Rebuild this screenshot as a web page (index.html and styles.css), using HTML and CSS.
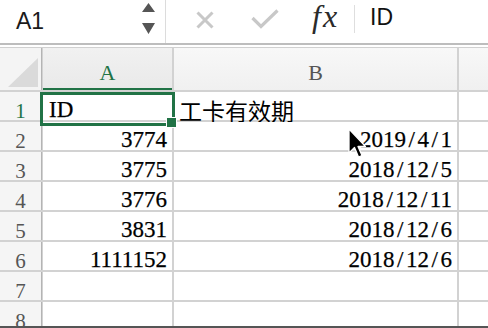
FILE: index.html
```html
<!DOCTYPE html>
<html>
<head>
<meta charset="utf-8">
<link rel="stylesheet" href="styles.css">
</head>
<body>
<div class="fbar">
  <div class="namebox">
    <span class="name">A1</span>
    <svg class="spin" width="13" height="31" viewBox="0 0 13 31"><path d="M6.5 0 L13 9 L0 9 Z M0 20 L13 20 L6.5 31 Z" fill="#555"/></svg>
  </div>
  <svg class="xicon" width="18" height="18" viewBox="0 0 18 18"><path d="M1.5 1.5 L16.5 16.5 M16.5 1.5 L1.5 16.5" stroke="#c8c8c8" stroke-width="3" fill="none"/></svg>
  <svg class="check" width="28" height="20" viewBox="0 0 28 20"><path d="M1.5 9 L10 17.5 L26.5 1.5" stroke="#c8c8c8" stroke-width="3.2" fill="none"/></svg>
  <span class="fx">fx</span>
  <span class="fsep"></span>
  <span class="ftext">ID</span>
</div>
<div class="sheetwrap">
  <div class="sheet">
    <div class="corner"><svg width="41" height="42" viewBox="0 0 41 42"><path d="M8 39 L38 39 L38 10 Z" fill="#dadada"/></svg></div>
    <div class="colhead active">A</div>
    <div class="colhead">B</div>
    <div class="colhead"></div>

    <div class="rowhead active">1</div><div class="cell">ID</div><div class="cell cjk" lang="zh-CN">工卡有效期</div><div class="cell"></div>
    <div class="rowhead">2</div><div class="cell num">3774</div><div class="cell num">2019<span class="s">/</span>4<span class="s">/</span>1</div><div class="cell"></div>
    <div class="rowhead">3</div><div class="cell num">3775</div><div class="cell num">2018<span class="s">/</span>12<span class="s">/</span>5</div><div class="cell"></div>
    <div class="rowhead">4</div><div class="cell num">3776</div><div class="cell num">2018<span class="s">/</span>12<span class="s">/</span>11</div><div class="cell"></div>
    <div class="rowhead">5</div><div class="cell num">3831</div><div class="cell num">2018<span class="s">/</span>12<span class="s">/</span>6</div><div class="cell"></div>
    <div class="rowhead">6</div><div class="cell num">1111152</div><div class="cell num">2018<span class="s">/</span>12<span class="s">/</span>6</div><div class="cell"></div>
    <div class="rowhead">7</div><div class="cell"></div><div class="cell"></div><div class="cell"></div>
    <div class="rowhead">8</div><div class="cell"></div><div class="cell"></div><div class="cell"></div>
  </div>
  <div class="sel"></div>
  <div class="handle"></div>
  <svg class="cursor" width="20" height="32" viewBox="0 0 20 32"><path d="M1 1 L1 25 L6.5 19.5 L10.5 29 L14 27.5 L10 18.5 L17.5 18.5 Z" fill="#000" stroke="#fff" stroke-width="1.3" stroke-linejoin="round"/></svg>
</div>
</body>
</html>
```
FILE: styles.css
```css
html, body {
  margin: 0;
  padding: 0;
  background: #fff;
  width: 488px;
  height: 328px;
  overflow: hidden;
}
body {
  font-family: "Liberation Serif", "Times New Roman", serif;
}
.fbar {
  display: flex;
  align-items: flex-start;
  height: 43px;
  border-bottom: 2px solid #bdbdbd;
  background: #fff;
}
.namebox {
  width: 166px;
  height: 43px;
  box-sizing: border-box;
  padding-left: 16px;
  border-right: 1px solid #dcdcdc;
  display: flex;
  align-items: flex-start;
}
.name {
  flex: 1;
  font-family: "Liberation Sans", Arial, sans-serif;
  font-size: 23px;
  line-height: 23px;
  padding-top: 10px;
  color: #1a1a1a;
}
.spin {
  margin-top: 3px;
  margin-right: 10px;
}
.xicon {
  margin-left: 30px;
  margin-top: 11px;
}
.check {
  margin-left: 37px;
  margin-top: 9px;
}
.fx {
  margin-left: 33px;
  padding-right: 3px;
  font-family: "Liberation Serif", serif;
  font-style: italic;
  font-size: 32px;
  line-height: 36px;
  margin-top: -2px;
  letter-spacing: 2px;
  color: #2a2a2a;
}
.fsep {
  width: 1px;
  height: 28px;
  margin-top: 5px;
  margin-left: 12px;
  background: #dedede;
}
.ftext {
  margin-left: 15px;
  font-family: "Liberation Sans", Arial, sans-serif;
  font-size: 23px;
  line-height: 23px;
  padding-top: 6px;
  color: #111;
}
.sheetwrap {
  position: relative;
  margin-top: 2px;
  border-top: 1px solid #d0d0d0;
}
.sheet {
  display: grid;
  grid-template-columns: 41px 129px 283px 1fr;
  grid-template-rows: 42px repeat(7, 28px) 24px;
  gap: 2px;
  background: #d2d2d2;
  border-bottom: 2px solid #555;
  height: 280px;
  box-sizing: border-box;
  overflow: hidden;
}
.corner {
  background: #f4f4f4;
  box-shadow: 1px 0 0 #b4b4b4;
}
.corner svg {
  display: block;
}
.colhead {
  background: linear-gradient(#f8f8f8, #f0f0f0);
  text-align: center;
  font-size: 22px;
  line-height: 24px;
  padding-top: 13px;
  box-sizing: border-box;
  color: #555;
}
.colhead.active {
  color: #217346;
  background: linear-gradient(#f1f1f1, #e9e9e9);
  box-shadow: inset 0 -2px 0 #217346;
}
.rowhead {
  background: #f5f5f5;
  box-shadow: 1px 0 0 #b4b4b4;
  text-align: center;
  font-size: 21px;
  line-height: 24px;
  padding-top: 7px;
  box-sizing: border-box;
  color: #555;
}
.rowhead.active {
  color: #217346;
}
.cell {
  background: #fff;
  font-size: 23px;
  line-height: 24px;
  padding: 6px 5px 0 6px;
  box-sizing: border-box;
  color: #000;
  white-space: nowrap;
  -webkit-text-stroke: 0.25px #000;
}
.cell.cjk {
  font-family: "Noto Sans CJK SC", sans-serif;
  font-size: 23px;
  padding-left: 5px;
  -webkit-text-stroke: 0;
}
.cell.num {
  text-align: right;
}
.s {
  display: inline-block;
  width: 11.5px;
  text-align: center;
}
.sel {
  position: absolute;
  left: 40px;
  top: 44px;
  width: 135px;
  height: 34px;
  box-sizing: border-box;
  border: 3px solid #217346;
}
.handle {
  position: absolute;
  left: 166px;
  top: 69px;
  width: 9px;
  height: 9px;
  background: #217346;
  border: 1px solid #fff;
}
.cursor {
  position: absolute;
  left: 348px;
  top: 80px;
}
```
